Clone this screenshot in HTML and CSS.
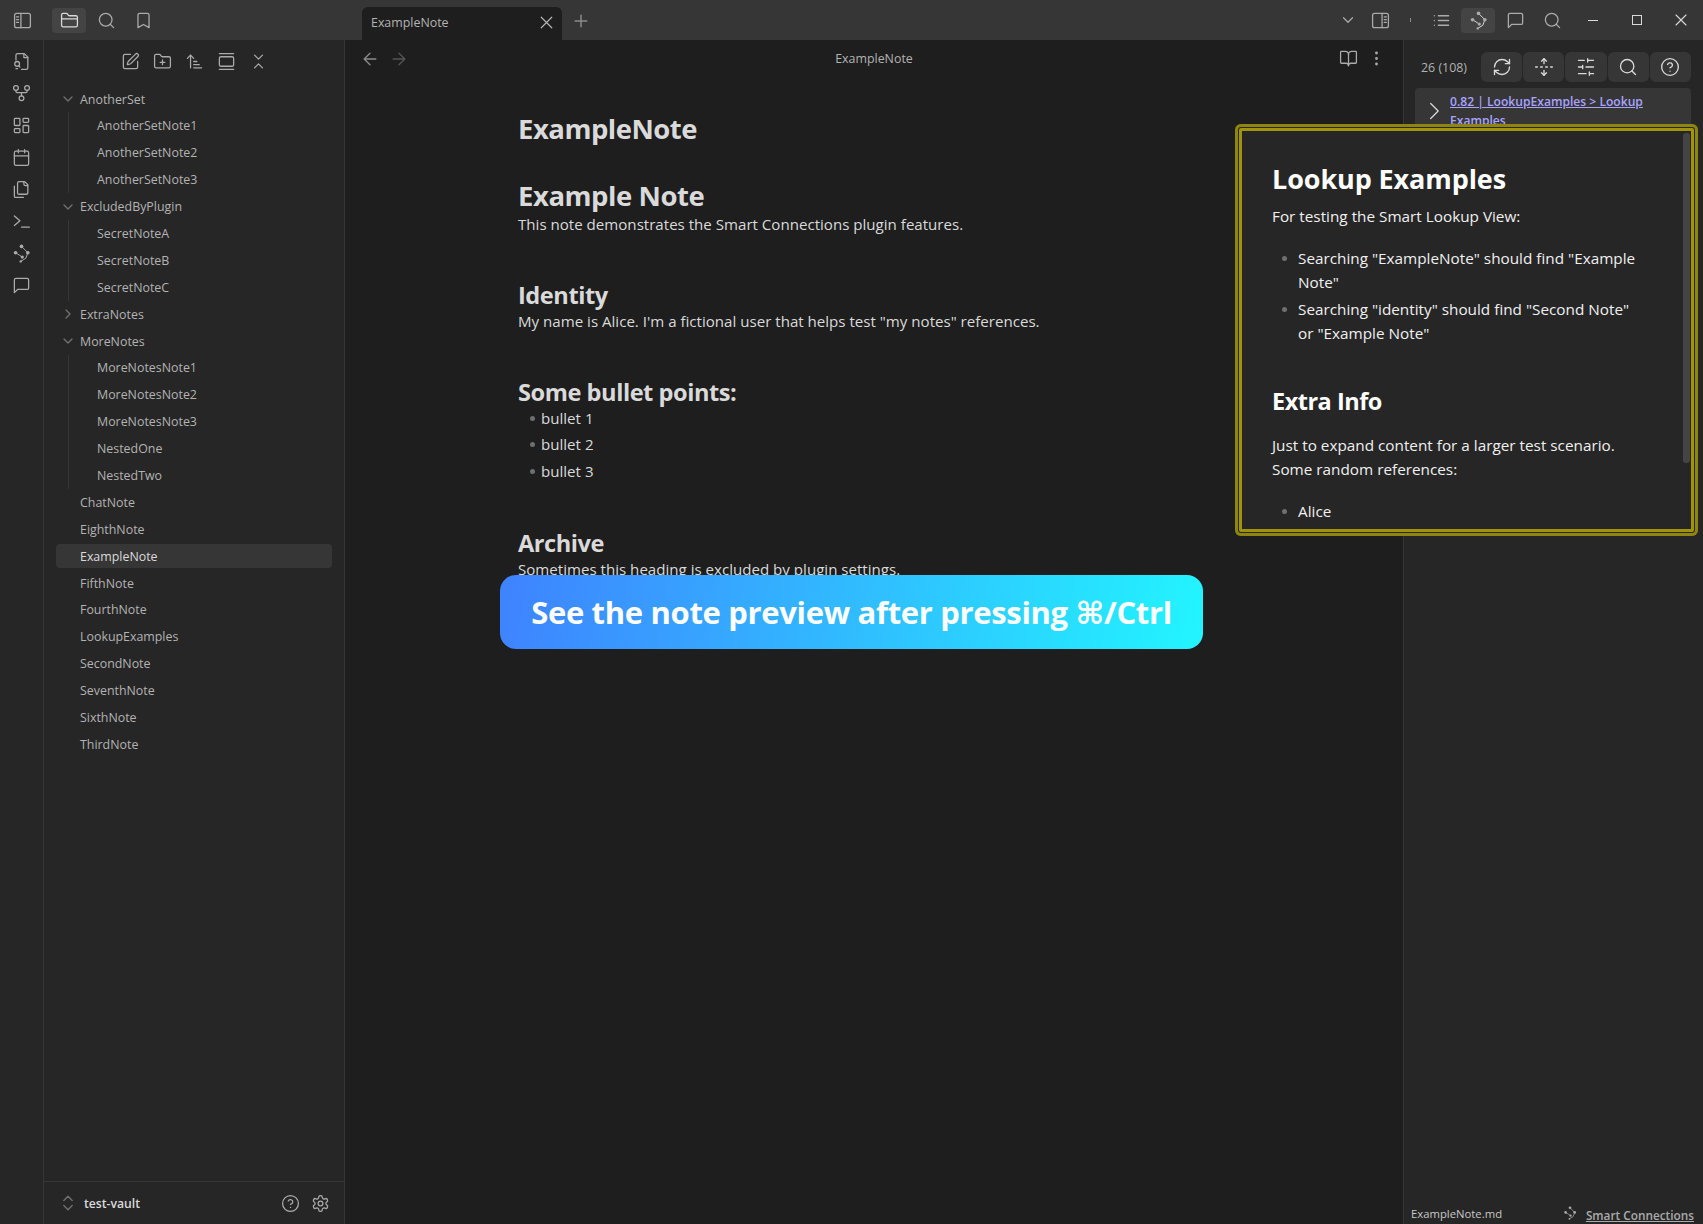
FILE: index.html
```html
<!DOCTYPE html>
<html lang="en">

<head>
    <meta charset="UTF-8">
    <meta name="viewport" content="width=device-width, initial-scale=1.0">
    <title>ExampleNote</title>
    <link rel="stylesheet" href="styles.css">
</head>

<body>
    <!-- Icon sprite -->
    <svg class="sprite" xmlns="http://www.w3.org/2000/svg">
        <symbol id="i-sidebar-left" viewBox="0 0 24 24"><rect x="2" y="3" width="20" height="18" rx="2.5"/><path d="M10 3v18M4.500 7.500H7M4.500 11H7M4.500 14.500H7"/></symbol>
        <symbol id="i-sidebar-right" viewBox="0 0 24 24"><rect x="2" y="3" width="20" height="18" rx="2.5"/><path d="M14 3v18M16.800 7.500h2.600M16.800 11h2.600M16.800 14.500h2.600"/></symbol>
        <symbol id="i-folder" viewBox="0 0 24 24"><path d="M4 20h16a2 2 0 0 0 2-2V8a2 2 0 0 0-2-2h-7.930a2 2 0 0 1-1.660-.9l-.82-1.200A2 2 0 0 0 7.930 3H4a2 2 0 0 0-2 2v13c0 1.100.9 2 2 2Z"/><path d="M2 10h20"/></symbol>
        <symbol id="i-search" viewBox="0 0 24 24"><circle cx="11" cy="11" r="8"/><path d="m21 21-4.300-4.300"/></symbol>
        <symbol id="i-bookmark" viewBox="0 0 24 24"><path d="m19 21-7-4-7 4V5a2 2 0 0 1 2-2h10a2 2 0 0 1 2 2v16z"/></symbol>
        <symbol id="i-file-search" viewBox="0 0 24 24"><path d="M9 2h6.500L20 6.500V20a2 2 0 0 1-2 2h-6"/><path d="M15 2v5h5"/><path d="M5 10V4a2 2 0 0 1 2-2h2"/><circle cx="6.500" cy="15" r="3"/><path d="m10 19-1.500-1.800"/><path d="M5 21h2"/></symbol>
        <symbol id="i-fork" viewBox="0 0 24 24"><circle cx="12" cy="18" r="3"/><circle cx="5" cy="5" r="3"/><circle cx="19" cy="5" r="3"/><path d="M19 8v1.500c0 1-.5 1.500-1.500 1.500h-11C5.500 11 5 10.500 5 9.500V8"/><path d="M12 11v4"/></symbol>
        <symbol id="i-dashboard" viewBox="0 0 24 24"><rect x="3" y="3" width="7" height="9" rx="1"/><rect x="14" y="3" width="7" height="5" rx="1"/><rect x="14" y="12" width="7" height="9" rx="1"/><rect x="3" y="16" width="7" height="5" rx="1"/></symbol>
        <symbol id="i-calendar" viewBox="0 0 24 24"><rect x="3" y="4" width="18" height="18" rx="2"/><path d="M16 2v4M8 2v4M3 10h18"/></symbol>
        <symbol id="i-files" viewBox="0 0 24 24"><path d="M20 7h-3a2 2 0 0 1-2-2V2"/><path d="M9 18a2 2 0 0 1-2-2V4a2 2 0 0 1 2-2h7l4 4v10a2 2 0 0 1-2 2Z"/><path d="M3 7.600v12.800A1.600 1.600 0 0 0 4.600 22h9.800"/></symbol>
        <symbol id="i-terminal" viewBox="0 0 24 24"><path d="m3 17 7-6-7-6"/><path d="M12 19h10"/></symbol>
        <symbol id="i-smart" viewBox="0 0 24 24"><path stroke-width="1.200" d="M12 3 20 11 17.500 18 11 22M4.500 11l8.500 5.500"/><g class="fill"><circle cx="12" cy="3" r="2.300"/><circle cx="4.500" cy="11" r="2.300"/><circle cx="13" cy="16.500" r="2"/><circle cx="20" cy="11" r="2.300"/><circle cx="11" cy="22" r="1.500"/></g></symbol>
        <symbol id="i-message" viewBox="0 0 24 24"><path d="M21 15a2 2 0 0 1-2 2H7l-4 4V5a2 2 0 0 1 2-2h14a2 2 0 0 1 2 2z"/></symbol>
        <symbol id="i-pen" viewBox="0 0 24 24"><path d="M12 3H5a2 2 0 0 0-2 2v14a2 2 0 0 0 2 2h14a2 2 0 0 0 2-2v-7"/><path d="M18.375 2.625a1 1 0 0 1 3 3l-9.013 9.014a2 2 0 0 1-.853.505l-2.873.84a.5.5 0 0 1-.62-.62l.84-2.873a2 2 0 0 1 .506-.852z"/></symbol>
        <symbol id="i-folder-plus" viewBox="0 0 24 24"><path d="M12 10v6M9 13h6"/><path d="M20 20a2 2 0 0 0 2-2V8a2 2 0 0 0-2-2h-7.900a2 2 0 0 1-1.690-.9L9.600 3.900A2 2 0 0 0 7.930 3H4a2 2 0 0 0-2 2v13a2 2 0 0 0 2 2Z"/></symbol>
        <symbol id="i-sort" viewBox="0 0 24 24"><path d="m3 8 4-4 4 4"/><path d="M7 4v16M11 12h4M11 16h7M11 20h10"/></symbol>
        <symbol id="i-gallery" viewBox="0 0 24 24"><path d="M3 2h18"/><rect x="3" y="6" width="18" height="12" rx="2"/><path d="M3 22h18"/></symbol>
        <symbol id="i-collapse" viewBox="0 0 24 24"><path d="m7 20 5-5 5 5"/><path d="m7 4 5 5 5-5"/></symbol>
        <symbol id="i-refresh" viewBox="0 0 24 24"><path d="M3 12a9 9 0 0 1 9-9 9.750 9.750 0 0 1 6.740 2.740L21 8"/><path d="M21 3v5h-5"/><path d="M21 12a9 9 0 0 1-9 9 9.750 9.750 0 0 1-6.740-2.740L3 16"/><path d="M8 16H3v5"/></symbol>
        <symbol id="i-unfold" viewBox="0 0 24 24"><path d="M12 22v-6M12 8V2M4 12H2M10 12H8M16 12h-2M22 12h-2"/><path d="m15 19-3 3-3-3"/><path d="m15 5-3-3-3 3"/></symbol>
        <symbol id="i-sliders" viewBox="0 0 24 24"><path d="M21 4h-7M10 4H3M21 12h-9M8 12H3M21 20h-5M12 20H3M14 2v4M8 10v4M16 18v4"/></symbol>
        <symbol id="i-help" viewBox="0 0 24 24"><circle cx="12" cy="12" r="10"/><path d="M9.090 9a3 3 0 0 1 5.830 1c0 2-3 3-3 3"/><path d="M12 17h.01"/></symbol>
        <symbol id="i-settings" viewBox="0 0 24 24"><path d="M12.220 2h-.44a2 2 0 0 0-2 2v.18a2 2 0 0 1-1 1.730l-.43.25a2 2 0 0 1-2 0l-.15-.08a2 2 0 0 0-2.730.73l-.22.38a2 2 0 0 0 .73 2.730l.15.1a2 2 0 0 1 1 1.720v.51a2 2 0 0 1-1 1.740l-.15.09a2 2 0 0 0-.73 2.730l.22.38a2 2 0 0 0 2.730.73l.15-.08a2 2 0 0 1 2 0l.43.25a2 2 0 0 1 1 1.730V20a2 2 0 0 0 2 2h.44a2 2 0 0 0 2-2v-.18a2 2 0 0 1 1-1.730l.43-.25a2 2 0 0 1 2 0l.15.08a2 2 0 0 0 2.730-.73l.22-.39a2 2 0 0 0-.73-2.730l-.15-.08a2 2 0 0 1-1-1.740v-.5a2 2 0 0 1 1-1.740l.15-.09a2 2 0 0 0 .73-2.730l-.22-.38a2 2 0 0 0-2.730-.73l-.15.08a2 2 0 0 1-2 0l-.43-.25a2 2 0 0 1-1-1.730V4a2 2 0 0 0-2-2z"/><circle cx="12" cy="12" r="3"/></symbol>
        <symbol id="i-book" viewBox="0 0 24 24"><path d="M12 7v14"/><path d="M3 18a1 1 0 0 1-1-1V4a1 1 0 0 1 1-1h5a4 4 0 0 1 4 4 4 4 0 0 1 4-4h5a1 1 0 0 1 1 1v13a1 1 0 0 1-1 1h-6a3 3 0 0 0-3 3 3 3 0 0 0-3-3z"/></symbol>
        <symbol id="i-more" viewBox="0 0 24 24"><circle cx="12" cy="5" r="1"/><circle cx="12" cy="12" r="1"/><circle cx="12" cy="19" r="1"/></symbol>
        <symbol id="i-list" viewBox="0 0 24 24"><path d="M8 6h13M8 12h13M8 18h13M3 6h.01M3 12h.01M3 18h.01"/></symbol>
        <symbol id="i-updown" viewBox="0 0 24 24"><path d="m7 15 5 5 5-5"/><path d="m7 9 5-5 5 5"/></symbol>
        <symbol id="i-down" viewBox="0 0 24 24"><path d="m6 9 6 6 6-6"/></symbol>
        <symbol id="i-right" viewBox="0 0 24 24"><path d="m8 3 9 9-9 9"/></symbol>
        <symbol id="i-x" viewBox="0 0 24 24"><path d="M18 6 6 18M6 6l12 12"/></symbol>
        <symbol id="i-plus" viewBox="0 0 24 24"><path d="M5 12h14M12 5v14"/></symbol>
        <symbol id="i-back" viewBox="0 0 24 24"><path d="m12 19-7-7 7-7M19 12H5"/></symbol>
        <symbol id="i-forward" viewBox="0 0 24 24"><path d="M5 12h14M12 5l7 7-7 7"/></symbol>
    </svg>

    <!-- Title bar with the tab strip -->
    <header class="titlebar">
        <div class="tb-left">
            <span class="tb-btn"><svg class="icon"><use href="#i-sidebar-left"/></svg></span>
            <div class="tb-group">
                <span class="tb-btn active"><svg class="icon"><use href="#i-folder"/></svg></span>
                <span class="tb-btn"><svg class="icon"><use href="#i-search"/></svg></span>
                <span class="tb-btn"><svg class="icon"><use href="#i-bookmark"/></svg></span>
            </div>
        </div>
        <div class="tab-strip">
            <div class="tab">
                <span>ExampleNote</span>
                <svg class="icon tab-close"><use href="#i-x"/></svg>
            </div>
            <svg class="icon tab-plus"><use href="#i-plus"/></svg>
        </div>
        <div class="tb-right">
            <svg class="icon tb-chevron"><use href="#i-down"/></svg>
            <span class="tb-btn"><svg class="icon"><use href="#i-sidebar-right"/></svg></span>
            <span class="tb-tick"><i></i></span>
            <div class="tb-group flush">
                <span class="tb-btn"><svg class="icon"><use href="#i-list"/></svg></span>
                <span class="tb-btn active"><svg class="icon"><use href="#i-smart"/></svg></span>
                <span class="tb-btn"><svg class="icon"><use href="#i-message"/></svg></span>
                <span class="tb-btn"><svg class="icon"><use href="#i-search"/></svg></span>
            </div>
            <div class="win-controls">
                <span class="win-btn"><i class="win-min"></i></span>
                <span class="win-btn"><i class="win-max"></i></span>
                <span class="win-btn"><svg class="icon win-close"><use href="#i-x"/></svg></span>
            </div>
        </div>
    </header>

    <div class="workspace">
        <!-- Ribbon -->
        <nav class="ribbon">
            <svg class="icon"><use href="#i-file-search"/></svg>
            <svg class="icon"><use href="#i-fork"/></svg>
            <svg class="icon"><use href="#i-dashboard"/></svg>
            <svg class="icon"><use href="#i-calendar"/></svg>
            <svg class="icon"><use href="#i-files"/></svg>
            <svg class="icon"><use href="#i-terminal"/></svg>
            <svg class="icon"><use href="#i-smart"/></svg>
            <svg class="icon"><use href="#i-message"/></svg>
        </nav>

        <!-- File explorer -->
        <aside class="sidebar">
            <div class="nav-buttons">
                <svg class="icon"><use href="#i-pen"/></svg>
                <svg class="icon"><use href="#i-folder-plus"/></svg>
                <svg class="icon"><use href="#i-sort"/></svg>
                <svg class="icon"><use href="#i-gallery"/></svg>
                <svg class="icon"><use href="#i-collapse"/></svg>
            </div>
            <div class="tree">
                <div class="row folder"><svg class="caret"><use href="#i-down"/></svg>AnotherSet</div>
                <div class="children">
                    <div class="row">AnotherSetNote1</div>
                    <div class="row">AnotherSetNote2</div>
                    <div class="row">AnotherSetNote3</div>
                </div>
                <div class="row folder"><svg class="caret"><use href="#i-down"/></svg>ExcludedByPlugin</div>
                <div class="children">
                    <div class="row">SecretNoteA</div>
                    <div class="row">SecretNoteB</div>
                    <div class="row">SecretNoteC</div>
                </div>
                <div class="row folder"><svg class="caret closed"><use href="#i-down"/></svg>ExtraNotes</div>
                <div class="row folder"><svg class="caret"><use href="#i-down"/></svg>MoreNotes</div>
                <div class="children">
                    <div class="row">MoreNotesNote1</div>
                    <div class="row">MoreNotesNote2</div>
                    <div class="row">MoreNotesNote3</div>
                    <div class="row">NestedOne</div>
                    <div class="row">NestedTwo</div>
                </div>
                <div class="row file">ChatNote</div>
                <div class="row file">EighthNote</div>
                <div class="row file selected">ExampleNote</div>
                <div class="row file">FifthNote</div>
                <div class="row file">FourthNote</div>
                <div class="row file">LookupExamples</div>
                <div class="row file">SecondNote</div>
                <div class="row file">SeventhNote</div>
                <div class="row file">SixthNote</div>
                <div class="row file">ThirdNote</div>
            </div>
            <div class="vault-bar">
                <svg class="vault-switch"><use href="#i-updown"/></svg>
                <span class="vault-name">test-vault</span>
                <svg class="icon"><use href="#i-help"/></svg>
                <svg class="icon"><use href="#i-settings"/></svg>
            </div>
        </aside>

        <!-- Note pane -->
        <main class="note-pane">
            <div class="view-header">
                <svg class="icon nav-arrow"><use href="#i-back"/></svg>
                <svg class="icon nav-arrow dim"><use href="#i-forward"/></svg>
                <span class="view-title">ExampleNote</span>
                <svg class="icon"><use href="#i-book"/></svg>
                <svg class="icon"><use href="#i-more"/></svg>
            </div>
            <article class="note">
                <h1 class="note-title">ExampleNote</h1>
                <h2 class="h-big">Example Note</h2>
                <p>This note demonstrates the Smart Connections plugin features.</p>
                <h2>Identity</h2>
                <p>My name is Alice. I'm a fictional user that helps test "my notes" references.</p>
                <h2>Some bullet points:</h2>
                <ul>
                    <li>bullet 1</li>
                    <li>bullet 2</li>
                    <li>bullet 3</li>
                </ul>
                <h2>Archive</h2>
                <p>Sometimes this heading is excluded by plugin settings.</p>
            </article>
        </main>

        <!-- Smart Connections panel -->
        <aside class="connections">
            <div class="conn-top">
                <span class="conn-count">26 (108)</span>
                <div class="conn-actions">
                    <span class="conn-btn"><svg class="icon"><use href="#i-refresh"/></svg></span>
                    <span class="conn-btn"><svg class="icon"><use href="#i-unfold"/></svg></span>
                    <span class="conn-btn"><svg class="icon"><use href="#i-sliders"/></svg></span>
                    <span class="conn-btn"><svg class="icon"><use href="#i-search"/></svg></span>
                    <span class="conn-btn"><svg class="icon"><use href="#i-help"/></svg></span>
                </div>
            </div>
            <div class="result">
                <svg class="result-caret"><use href="#i-right"/></svg>
                <a class="result-link">0.82 | LookupExamples &gt; Lookup Examples</a>
            </div>
            <div class="conn-footer">
                <span class="conn-file">ExampleNote.md</span>
                <svg class="conn-logo"><use href="#i-smart"/></svg>
                <a class="conn-brand">Smart Connections</a>
            </div>
        </aside>
    </div>

    <!-- Preview popover, highlighted -->
    <div class="popover">
        <div class="popover-body">
            <h2>Lookup Examples</h2>
            <p>For testing the Smart Lookup View:</p>
            <ul>
                <li>Searching "ExampleNote" should find "Example Note"</li>
                <li>Searching "identity" should find "Second Note" or "Example Note"</li>
            </ul>
            <h3>Extra Info</h3>
            <p>Just to expand content for a larger test scenario.<br>Some random references:</p>
            <ul>
                <li>Alice</li>
            </ul>
        </div>
        <div class="popover-scroll"></div>
    </div>

    <!-- Promo banner -->
    <div class="banner">See the note preview after pressing ⌘/Ctrl</div>
</body>

</html>
```

FILE: styles.css
```css
* {
    box-sizing: border-box;
}

body {
    margin: 0;
    width: 1703px;
    height: 1224px;
    overflow: hidden;
    position: relative;
    display: flex;
    flex-direction: column;
    background: #1e1e1e;
    color: #dadada;
    font-family: "Open Sans", "DejaVu Sans", "Noto Sans CJK SC", sans-serif;
    font-size: 15px;
}

.sprite {
    display: none;
}

.icon {
    width: 19px;
    height: 19px;
    flex: none;
    fill: none;
    stroke: #ababab;
    stroke-width: 1.6;
    stroke-linecap: round;
    stroke-linejoin: round;
}

.fill {
    fill: currentColor;
    color: #ababab;
    stroke: none;
}

/* Title bar */
.titlebar {
    height: 40px;
    flex: none;
    display: flex;
    background: #363636;
}

.tb-left {
    width: 362px;
    flex: none;
    display: flex;
    align-items: center;
    padding-left: 5px;
}

.tb-group {
    display: flex;
    align-items: center;
    margin-left: 13px;
    gap: 3px;
}

.tb-group.flush {
    margin-left: 0;
}

.tb-btn {
    width: 34px;
    height: 25px;
    display: flex;
    align-items: center;
    justify-content: center;
    border-radius: 4px;
}

.tb-btn.active {
    background: #444444;
}

.tb-btn.active .icon {
    stroke: #dadada;
}

.tb-btn.active .fill {
    color: #dadada;
}

.tab-strip {
    flex: 1;
    display: flex;
    align-items: flex-end;
}

.tab {
    width: 200px;
    height: 33px;
    display: flex;
    align-items: center;
    justify-content: space-between;
    padding: 0 5px 2px 9px;
    background: #1e1e1e;
    border-radius: 6px 6px 0 0;
    font-size: 12.4px;
    color: #b3b3b3;
}

.tab-close {
    width: 21px;
    height: 21px;
    stroke: #b3b3b3;
    stroke-width: 1.4;
}

.tab-plus {
    width: 20px;
    height: 20px;
    margin: 0 0 9px 9px;
    stroke: #8a8a8a;
    stroke-width: 1.8;
}

.tb-right {
    display: flex;
    align-items: center;
}

.tb-chevron {
    width: 18px;
    height: 18px;
    margin-right: 6px;
}

.tb-tick {
    width: 27px;
    display: flex;
    justify-content: center;
}

.tb-tick i {
    width: 1px;
    height: 4px;
    background: #8a8a8a;
}

.win-controls {
    display: flex;
    margin-left: 2px;
}

.win-btn {
    width: 44px;
    height: 40px;
    display: flex;
    align-items: center;
    justify-content: center;
}

.win-min {
    width: 10px;
    height: 1px;
    background: #dadada;
}

.win-max {
    width: 10px;
    height: 10px;
    border: 1px solid #dadada;
}

.win-close {
    width: 20px;
    height: 20px;
    stroke: #dadada;
    stroke-width: 1.3;
}

/* Main layout */
.workspace {
    flex: 1;
    display: flex;
    min-height: 0;
}

.ribbon {
    width: 44px;
    flex: none;
    display: flex;
    flex-direction: column;
    align-items: center;
    gap: 13px;
    padding-top: 11.5px;
    background: #262626;
    border-right: 1px solid #363636;
}

.sidebar {
    width: 301px;
    flex: none;
    display: flex;
    flex-direction: column;
    background: #262626;
    border-right: 1px solid #363636;
}

.nav-buttons {
    display: flex;
    justify-content: center;
    gap: 13px;
    padding: 11.5px 0 0;
    height: 44px;
}

.tree {
    flex: 1;
    padding: 1.6px 12px 0 12px;
    font-size: 12.4px;
    color: #b3b3b3;
}

.row {
    height: 26.9px;
    display: flex;
    align-items: center;
    position: relative;
    isolation: isolate;
    padding-left: 41px;
}

.row.folder,
.row.file {
    padding-left: 24px;
}

.row.selected {
    color: #dadada;
}

/* highlight is a little shorter than the row */
.row.selected::before {
    content: "";
    position: absolute;
    left: 0;
    right: 0;
    top: 1.5px;
    bottom: 1.5px;
    z-index: -1;
    background: #363636;
    border-radius: 4px;
}

.children {
    position: relative;
}

.children::before {
    content: "";
    position: absolute;
    left: 12px;
    top: 0;
    bottom: 0;
    width: 1px;
    background: #363636;
}

.caret {
    position: absolute;
    left: 4px;
    top: 5.5px;
    width: 16px;
    height: 16px;
    fill: none;
    stroke: #6f6f6f;
    stroke-width: 2;
    stroke-linecap: round;
    stroke-linejoin: round;
}

.caret.closed {
    transform: rotate(-90deg);
}

.vault-bar {
    height: 43px;
    flex: none;
    display: flex;
    align-items: center;
    gap: 11px;
    padding: 0 14px 0 14px;
    border-top: 1px solid #363636;
}

.vault-switch {
    width: 20px;
    height: 20px;
    margin-right: -5px;
    fill: none;
    stroke: #6f6f6f;
    stroke-width: 1.7;
    stroke-linecap: round;
    stroke-linejoin: round;
}

.vault-name {
    flex: 1;
    font-size: 12.2px;
    font-weight: 600;
    color: #dadada;
}

/* Note pane */
.note-pane {
    flex: 1;
    min-width: 0;
}

.view-header {
    height: 37px;
    display: flex;
    align-items: center;
    gap: 9px;
    padding: 0 17px 0 15px;
}

.nav-arrow {
    width: 20px;
    height: 20px;
    stroke: #8a8a8a;
}

.nav-arrow.dim {
    stroke: #555555;
}

.view-title {
    flex: 1;
    text-align: center;
    font-size: 12.4px;
    color: #b3b3b3;
}

.note {
    padding: 33px 0 0 173px;
}

.note h1,
.note h2 {
    margin: 0;
    font-weight: 700;
    color: #dadada;
}

.note-title {
    font-size: 27.5px;
    line-height: 38px;
    letter-spacing: -0.5px;
    margin-bottom: 29px !important;
}

.note h2 {
    font-size: 23.6px;
    line-height: 30px;
    letter-spacing: -0.45px;
    margin-top: 44px;
}

.note h2.h-big {
    font-size: 27.5px;
    letter-spacing: -0.45px;
    margin-top: 0;
    margin-bottom: -3.5px;
    line-height: 38px;
}

.note p {
    margin: -1px 0 0;
    font-size: 15.1px;
    line-height: 24px;
    color: #dadada;
}

.note h2.h-big + p {
    margin-top: -2px;
}

.note ul {
    margin: -2px 0 0;
    padding-left: 23px;
    font-size: 15.1px;
    line-height: 26.5px;
    list-style: none;
}

.note li {
    position: relative;
}

.note li::before,
.popover li::before {
    content: "";
    position: absolute;
    left: -11px;
    top: 11px;
    width: 5px;
    height: 5px;
    border-radius: 50%;
    background: #6f6f6f;
}

/* Smart Connections panel */
.connections {
    width: 300px;
    flex: none;
    display: flex;
    flex-direction: column;
    background: #262626;
    border-left: 1px solid #363636;
    padding: 0 12px 0 11px;
}

.conn-top {
    display: flex;
    align-items: center;
    justify-content: space-between;
    padding: 12px 0 6px 6px;
}

.conn-count {
    font-size: 12.4px;
    color: #b3b3b3;
}

.conn-actions {
    display: flex;
    gap: 1px;
}

.conn-btn {
    width: 41.2px;
    height: 30px;
    display: flex;
    align-items: center;
    justify-content: center;
    background: #363636;
    border-radius: 6px;
}

.conn-btn .icon {
    width: 20px;
    height: 20px;
    stroke: #dadada;
}

.result {
    display: flex;
    align-items: flex-start;
    gap: 6px;
    padding: 4px 12px 4px 9px;
    background: #363636;
    border-radius: 4px;
    height: 50px;
}

.result-caret {
    width: 20px;
    height: 20px;
    margin-top: 9px;
    flex: none;
    fill: none;
    stroke: #dadada;
    stroke-width: 1.5;
    stroke-linecap: round;
    stroke-linejoin: round;
}

.result-link {
    font-size: 12.1px;
    font-weight: 600;
    line-height: 19px;
    color: #a8a3ff;
    text-decoration: underline;
}

.conn-footer {
    margin-top: auto;
    display: flex;
    align-items: center;
    height: 22px;
    margin-right: -3px;
    margin-left: -4px;
}

.conn-file {
    flex: 1;
    font-size: 11.3px;
    color: #c8c8c8;
}

.conn-logo {
    width: 14px;
    height: 14px;
    margin-right: 9px;
    fill: none;
    stroke: #ababab;
    stroke-width: 1.6;
}

.conn-brand {
    font-size: 11.8px;
    font-weight: 600;
    color: #ababab;
    text-decoration: underline;
    padding-top: 4px;
}

/* Preview popover with its yellow highlight */
.popover {
    position: absolute;
    left: 1235px;
    top: 124px;
    width: 463px;
    height: 412px;
    background: #262626;
    border-radius: 6px;
    box-shadow: inset 0 0 0 3px #8f8612, inset 0 0 0 4px #2a2a10, inset 0 0 0 7px #a1930e;
    overflow: hidden;
}

.popover-body {
    padding: 36px 0 0 37px;
    width: 410px;
    font-size: 15.3px;
    line-height: 24px;
    color: #f0f0f0;
}

.popover h2 {
    margin: 0 0 6px;
    font-size: 27px;
    line-height: 38px;
    font-weight: 700;
    letter-spacing: -0.1px;
    color: #ffffff;
}

.popover h3 {
    margin: 38px 0 14px;
    font-size: 23.5px;
    line-height: 36px;
    font-weight: 700;
    letter-spacing: -0.5px;
    color: #ffffff;
}

.popover p {
    margin: 0 0 18px;
}

.popover ul {
    margin: 0;
    padding-left: 26px;
    list-style: none;
}

.popover li {
    position: relative;
    margin-bottom: 3px;
}

.popover li::before {
    left: -16px;
    top: 10px;
}

.popover-scroll {
    position: absolute;
    left: 448px;
    top: 9px;
    width: 7px;
    height: 330px;
    background: #444444;
    border-radius: 3px;
}

/* Promo banner */
.banner {
    position: absolute;
    left: 500px;
    top: 575px;
    width: 703px;
    height: 74px;
    display: flex;
    align-items: center;
    justify-content: center;
    border-radius: 16px;
    background: linear-gradient(100deg, #3f82ff, #22f5ff);
    color: #ffffff;
    font-size: 31px;
    font-weight: 700;
    letter-spacing: -0.33px;
    white-space: nowrap;
}
```
